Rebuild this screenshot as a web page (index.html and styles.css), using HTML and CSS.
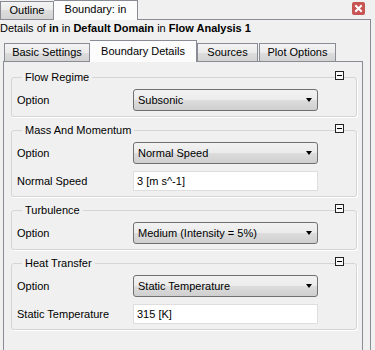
FILE: index.html
```html
<!DOCTYPE html>
<html lang="en">
<head>
    <meta charset="UTF-8">
    <title>Boundary: in</title>
    <link rel="stylesheet" href="styles.css">
</head>
<body>
    <div class="view-tabs">
        <div class="view-tab">Outline</div>
        <div class="view-tab active">Boundary: in</div>
        <svg class="close" width="13" height="13" viewBox="0 0 13 13">
            <rect x="0" y="0" width="13" height="13" rx="2" fill="#c75352"/>
            <path d="M4 4 L9 9 M9 4 L4 9" stroke="#fff" stroke-width="2" stroke-linecap="square"/>
        </svg>
    </div>

    <div class="panel">
        <div class="details">Details of <b>in</b> in <b>Default Domain</b> in <b>Flow Analysis 1</b></div>

        <div class="page-tabs">
            <div class="page-tab basic">Basic Settings</div>
            <div class="page-tab active">Boundary Details</div>
            <div class="page-tab sources">Sources</div>
            <div class="page-tab plot">Plot Options</div>
        </div>

        <div class="tab-page">
            <fieldset class="group first">
                <legend>Flow Regime</legend>
                <span class="collapse"></span>
                <div class="row">
                    <label>Option</label>
                    <div class="combo"><span>Subsonic</span><i class="arrow"></i></div>
                </div>
            </fieldset>

            <fieldset class="group">
                <legend>Mass And Momentum</legend>
                <span class="collapse"></span>
                <div class="row">
                    <label>Option</label>
                    <div class="combo"><span>Normal Speed</span><i class="arrow"></i></div>
                </div>
                <div class="row">
                    <label>Normal Speed</label>
                    <div class="field">3 [m s^-1]</div>
                </div>
            </fieldset>

            <fieldset class="group">
                <legend>Turbulence</legend>
                <span class="collapse"></span>
                <div class="row">
                    <label>Option</label>
                    <div class="combo"><span>Medium (Intensity = 5%)</span><i class="arrow"></i></div>
                </div>
            </fieldset>

            <fieldset class="group">
                <legend>Heat Transfer</legend>
                <span class="collapse"></span>
                <div class="row">
                    <label>Option</label>
                    <div class="combo"><span>Static Temperature</span><i class="arrow"></i></div>
                </div>
                <div class="row">
                    <label>Static Temperature</label>
                    <div class="field">315 [K]</div>
                </div>
            </fieldset>
        </div>
    </div>
</body>
</html>
```

FILE: styles.css
```css
body {
    margin: 0;
    width: 375px;
    height: 350px;
    overflow: hidden;
    background: #f0f0f0;
    font-family: "Liberation Sans", Arial, sans-serif;
    font-size: 11px;
    color: #000;
}

/* top view tabs */
.view-tabs {
    display: flex;
    align-items: flex-end;
    height: 19px;
}

.view-tab {
    box-sizing: border-box;
    height: 18px;
    width: 54px;
    line-height: 17px;
    text-align: center;
    border: 1px solid #898c95;
    border-bottom: none;
    background: linear-gradient(#f3f3f3, #ebebeb 50%, #dddddd 50%, #d3d3d3);
}

.view-tab.active {
    position: relative;
    z-index: 1;
    width: 84px;
    height: 20px;
    margin-bottom: -1px;
    border-left: none;
    background: #fcfcfc;
}

.close {
    align-self: flex-start;
    margin: 2px 10px 0 auto;
}

/* outer panel */
.panel {
    width: 370px;
    height: 330px;
    border-top: 1px solid #898c95;
    border-right: 1px solid #898c95;
}

.details {
    padding: 2px 0 0 0;
    line-height: 13px;
}

/* inner tabs */
.page-tabs {
    display: flex;
    align-items: flex-end;
    height: 21px;
    margin-top: 5px;
    padding-left: 4px;
}

.page-tab {
    box-sizing: border-box;
    height: 18px;
    line-height: 17px;
    text-align: center;
    border: 1px solid #898c95;
    border-bottom: none;
    background: linear-gradient(#f3f3f3, #ebebeb 50%, #dddddd 50%, #d3d3d3);
}

.page-tab.basic { width: 86px; }
.page-tab.sources { width: 61px; }
.page-tab.plot { width: 77px; margin-left: 1px; }

.page-tab.active {
    position: relative;
    z-index: 1;
    width: 107px;
    height: 22px;
    margin-bottom: -1px;
    border-left: none;
    line-height: 20px;
    background: #fcfcfc;
}

.tab-page {
    box-sizing: border-box;
    width: 360px;
    height: 300px;
    margin-left: 3px;
    padding: 0 5px 0 7px;
    border: 1px solid #898c95;
    border-bottom: none;
    overflow: hidden;
}

/* group boxes */
.group {
    position: relative;
    margin: 6px 0 0 0;
    padding: 0 5px 5px 5px;
    border: 1px solid #d5d5d5;
    border-radius: 3px;
    box-shadow: 1px 1px 0 #fff;
}

.group.first {
    margin-top: 8px;
}

.group legend {
    margin-left: 5px;
    padding: 0 3px;
    line-height: 14px;
}

.collapse {
    position: absolute;
    top: -13px;
    right: 12px;
    box-sizing: border-box;
    width: 9px;
    height: 9px;
    border: 1px solid #222;
    background: #f8f8f8;
}

.collapse::after {
    content: "";
    position: absolute;
    left: 1px;
    top: 3px;
    width: 5px;
    height: 1px;
    background: #000;
}

.row {
    display: flex;
    align-items: center;
    margin-top: 5px;
}

.row + .row {
    margin-top: 7px;
}

.row label {
    width: 116px;
}

.combo {
    box-sizing: border-box;
    display: flex;
    align-items: center;
    justify-content: space-between;
    width: 185px;
    height: 22px;
    padding: 0 5px 0 4px;
    border: 1px solid #707070;
    border-radius: 3px;
    background: linear-gradient(#f2f2f2, #ebebeb 50%, #dddddd 50%, #cfcfcf);
}

.arrow {
    width: 0;
    height: 0;
    border-left: 3px solid transparent;
    border-right: 3px solid transparent;
    border-top: 4px solid #000;
}

.field {
    box-sizing: border-box;
    width: 185px;
    height: 20px;
    padding-left: 3px;
    line-height: 18px;
    border: 1px solid #dedede;
    background: #fff;
}
```
